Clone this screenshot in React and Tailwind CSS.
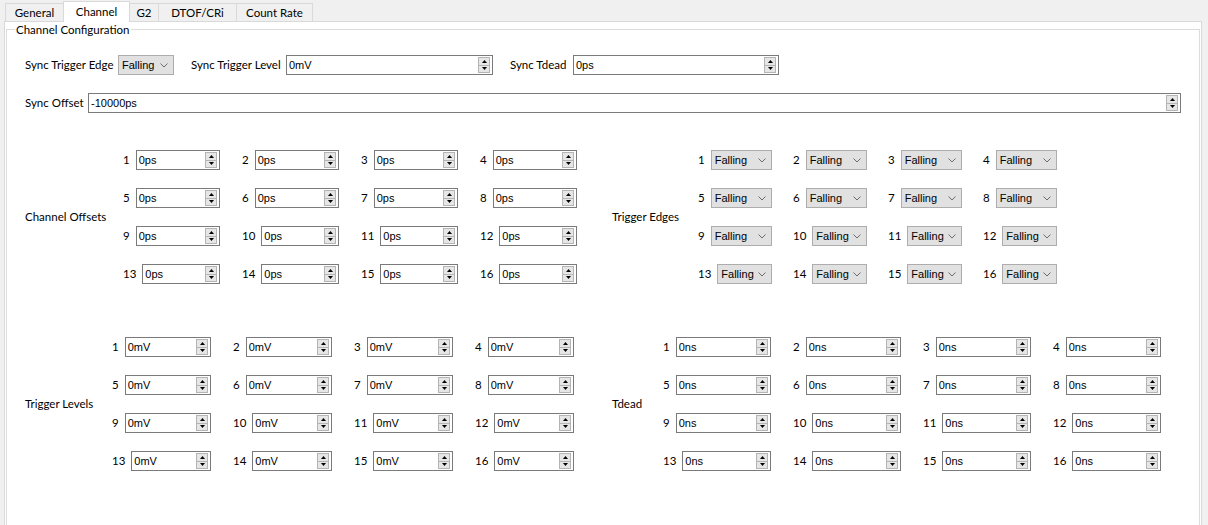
import React from "react";

const tabs = [
    { name: "General", cls: "w-[58px] border-l" },
    { name: "Channel", cls: "w-[67px] border-l border-r", active: true },
    { name: "G2", cls: "w-[28px]" },
    { name: "DTOF/CRi", cls: "w-[78px] border-l" },
    { name: "Count Rate", cls: "w-[77px] border-l border-r" },
];

const nums = Array.from({ length: 16 }, (_, i) => i + 1);

const SpinArrows = () => (
    <div className="ml-auto mr-[2px] flex h-[16px] w-[12px] shrink-0 flex-col border border-[#b4b4b4] bg-[#e6e6e6]">
        <div className="flex flex-1 items-center justify-center border-b border-[#b4b4b4]">
            <svg width="5" height="3" viewBox="0 0 5 3">
                <path d="M2.5 0L5 3H0z" fill="#000" />
            </svg>
        </div>
        <div className="flex flex-1 items-center justify-center">
            <svg width="5" height="3" viewBox="0 0 5 3">
                <path d="M0 0H5L2.5 3z" fill="#000" />
            </svg>
        </div>
    </div>
);

const SpinBox = ({ value, className = "" }) => (
    <div className={`flex h-[20px] shrink-0 items-center border border-[#7a7a7a] bg-white ${className}`}>
        <span className="pl-[2px] font-['Liberation_Sans',Arial,sans-serif] text-[11px] leading-none text-black">
            {value}
        </span>
        <SpinArrows />
    </div>
);

const Combo = ({ className = "" }) => (
    <div className={`flex h-[20px] shrink-0 items-center border border-[#adadad] bg-[#e1e1e1] pl-[3px] pr-[5px] ${className}`}>
        <span className="font-['Liberation_Sans',Arial,sans-serif] text-[11px] leading-none text-black">Falling</span>
        <svg className="ml-auto" width="8" height="5" viewBox="0 0 8 5">
            <path d="M0.5 0.5L4 4L7.5 0.5" stroke="#6d6d6d" fill="none" />
        </svg>
    </div>
);

const Cell = ({ n, children }) => (
    <div className="flex items-center gap-[6px]">
        <span className="shrink-0 leading-none">{n}</span>
        <div className="min-w-0 flex-1">{children}</div>
    </div>
);

const App = () => {
    return (
        <div className="h-[525px] w-[1208px] overflow-hidden bg-[#f0f0f0] font-['Lato',sans-serif] text-[11.5px] text-black">
            {/* tab bar */}
            <div className="flex h-[21px] items-end pl-[5px]">
                {tabs.map((t) =>
                    t.active ? (
                        <div
                            key={t.name}
                            className={`relative z-10 -mb-[1px] flex h-[21px] items-center justify-center border-t border-[#d9d9d9] bg-white pb-[1px] ${t.cls}`}
                        >
                            {t.name}
                        </div>
                    ) : (
                        <div
                            key={t.name}
                            className={`flex h-[18px] items-center justify-center border-t border-[#d9d9d9] bg-[#f0f0f0] pt-[1px] ${t.cls}`}
                        >
                            {t.name}
                        </div>
                    )
                )}
            </div>

            {/* tab pane */}
            <div className="ml-[4px] h-[520px] w-[1198px] border border-[#d9d9d9] bg-white px-[1px] pt-[7px]">
                <div className="relative h-[600px] border border-[#dcdcdc] pl-[18px] pt-[25px]">
                    <span className="absolute left-[8px] top-[-7px] bg-white px-[1px] leading-[14px]">
                        Channel Configuration
                    </span>

                    <div className="flex h-[20px] items-center">
                        <span className="w-[93px] shrink-0">Sync Trigger Edge</span>
                        <Combo className="w-[56px]" />
                        <span className="ml-[17px] w-[95px] shrink-0">Sync Trigger Level</span>
                        <SpinBox value="0mV" className="w-[207px]" />
                        <span className="ml-[17px] w-[63px] shrink-0">Sync Tdead</span>
                        <SpinBox value="0ps" className="w-[206px]" />
                    </div>

                    <div className="mt-[18px] flex h-[20px] items-center">
                        <span className="w-[63px] shrink-0">Sync Offset</span>
                        <SpinBox value="-10000ps" className="w-[1093px]" />
                    </div>

                    {/* offsets / edges */}
                    <div className="mt-[37px] flex items-center">
                        <span className="w-[98px] shrink-0">Channel Offsets</span>
                        <div className="grid w-[454px] shrink-0 grid-cols-4 gap-x-[22px] gap-y-[18px]">
                            {nums.map((n) => (
                                <Cell key={n} n={n}>
                                    <SpinBox value="0ps" className="w-full" />
                                </Cell>
                            ))}
                        </div>
                        <span className="ml-[35px] w-[86px] shrink-0">Trigger Edges</span>
                        <div className="grid w-[359px] shrink-0 grid-cols-4 gap-x-[21px] gap-y-[18px]">
                            {nums.map((n) => (
                                <Cell key={n} n={n}>
                                    <Combo className="w-full" />
                                </Cell>
                            ))}
                        </div>
                    </div>

                    {/* levels / tdead */}
                    <div className="mt-[53px] flex items-center">
                        <span className="w-[87px] shrink-0">Trigger Levels</span>
                        <div className="grid w-[462px] shrink-0 grid-cols-4 gap-x-[22px] gap-y-[18px]">
                            {nums.map((n) => (
                                <Cell key={n} n={n}>
                                    <SpinBox value="0mV" className="w-full" />
                                </Cell>
                            ))}
                        </div>
                        <span className="ml-[38px] w-[51px] shrink-0">Tdead</span>
                        <div className="grid w-[498px] shrink-0 grid-cols-4 gap-x-[22px] gap-y-[18px]">
                            {nums.map((n) => (
                                <Cell key={n} n={n}>
                                    <SpinBox value="0ns" className="w-full" />
                                </Cell>
                            ))}
                        </div>
                    </div>
                </div>
            </div>
        </div>
    );
};

export default App;
